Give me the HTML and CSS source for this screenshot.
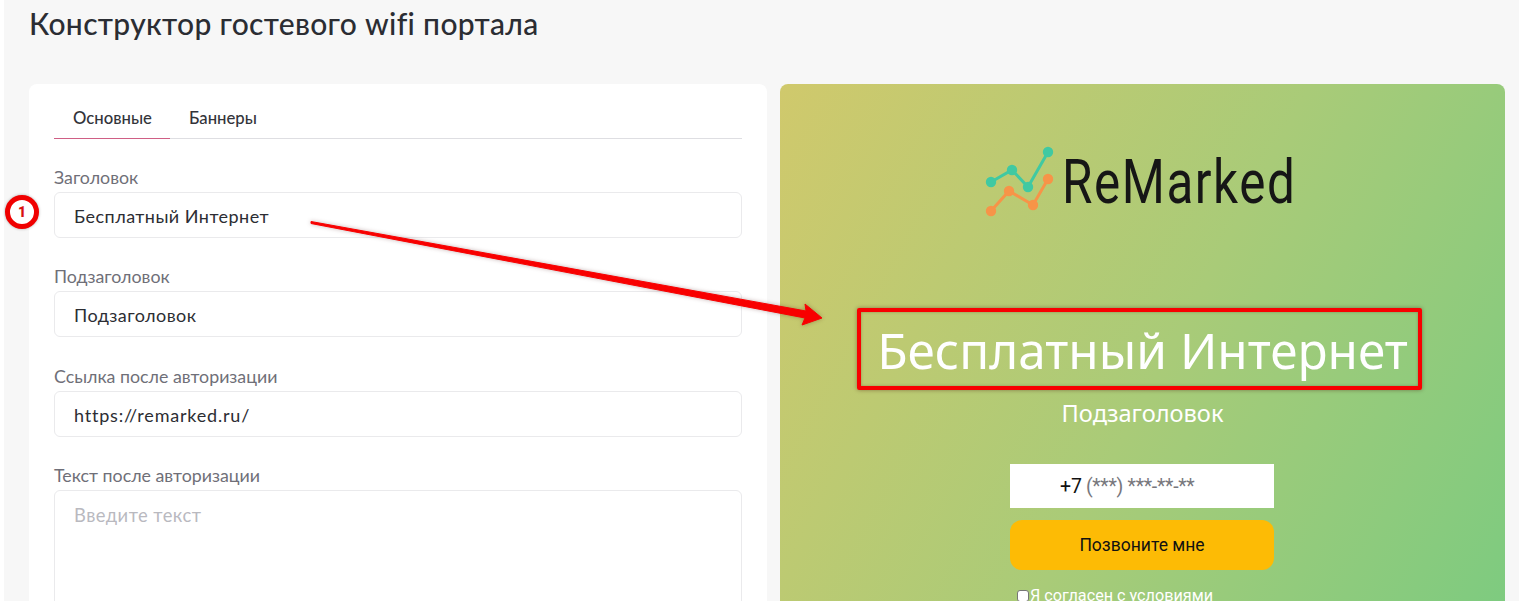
FILE: index.html
```html
<!DOCTYPE html>
<html lang="ru">
<head>
<meta charset="utf-8">
<title>Конструктор гостевого wifi портала</title>
<link rel="stylesheet" href="styles.css">
</head>
<body>
<main class="page">
  <h1 class="title">Конструктор гостевого wifi портала</h1>
  <div class="columns">
    <section class="card">
      <nav class="tabs">
        <a class="tab active">Основные</a>
        <a class="tab">Баннеры</a>
      </nav>
      <div class="field">
        <label class="label">Заголовок</label>
        <div class="input">Бесплатный Интернет</div>
      </div>
      <div class="field">
        <label class="label">Подзаголовок</label>
        <div class="input">Подзаголовок</div>
      </div>
      <div class="field">
        <label class="label">Ссылка после авторизации</label>
        <div class="input url">https://remarked.ru/</div>
      </div>
      <div class="field">
        <label class="label">Текст после авторизации</label>
        <div class="input area">Введите текст</div>
      </div>
    </section>
    <section class="preview">
      <div class="logo">
        <svg class="logo-mark" width="78" height="74" viewBox="0 0 78 74" aria-hidden="true">
          <polyline points="7,37 28,25 44,42 64,7" fill="none" stroke="#40c9a2" stroke-width="3"/>
          <circle cx="7" cy="37" r="5.2" fill="#40c9a2"/>
          <circle cx="28" cy="25" r="5.2" fill="#40c9a2"/>
          <circle cx="44" cy="42" r="5.2" fill="#40c9a2"/>
          <circle cx="64" cy="7" r="5.2" fill="#40c9a2"/>
          <polyline points="7,66 25,46 49,60 64,34" fill="none" stroke="#f79448" stroke-width="3"/>
          <circle cx="7" cy="66" r="5.2" fill="#f79448"/>
          <circle cx="25" cy="46" r="5.2" fill="#f79448"/>
          <circle cx="49" cy="60" r="5.2" fill="#f79448"/>
          <circle cx="64" cy="34" r="5.2" fill="#f79448"/>
        </svg>
        <span class="logo-text">ReMarked</span>
      </div>
      <h2 class="headline">Бесплатный Интернет</h2>
      <p class="subline">Подзаголовок</p>
      <div class="phone"><span class="phone-code">+7</span> <span class="phone-mask">(***) ***-**-**</span></div>
      <button class="call">Позвоните мне</button>
      <label class="consent"><span class="check"></span>Я согласен с условиями</label>
    </section>
  </div>
</main>
<div class="badge">1</div>
<div class="red-box"></div>
<svg class="arrow" width="530" height="120" viewBox="0 0 530 120" aria-hidden="true">
  <path d="M1,1.5 L496,91 L495,84 L512,98 L492,105 L495,98 L1,3.5 Z" fill="#f80000" stroke="#f80000" stroke-width="1" stroke-linejoin="round"/>
</svg>
</body>
</html>
```

FILE: styles.css
```css
* { box-sizing: border-box; }
html, body { margin: 0; height: 601px; overflow: hidden; background: #fff; }
body { font-family: "Inter", "Noto Sans", sans-serif; }

.page {
  margin-left: 4px;
  height: 601px;
  background: #f7f7f7;
  padding: 0 14px 0 25px;
  overflow: hidden;
}
.title {
  margin: 0;
  height: 84px;
  padding-top: 3px;
  font-family: "Lato", "Noto Sans", sans-serif;
  font-size: 30px;
  line-height: 40px;
  font-weight: 500;
  color: #2b2d33;
  letter-spacing: 0.33px;
}
.columns { display: flex; gap: 13px; align-items: flex-start; }

.card {
  width: 738px;
  height: 560px;
  flex: none;
  background: #fff;
  border-radius: 8px;
  padding: 16px 25px 0;
}
.tabs {
  display: flex;
  height: 39px;
  border-bottom: 1px solid #dedee2;
}
.tab {
  height: 39px;
  padding: 0 19px;
  font-family: "Lato", "Noto Sans", sans-serif;
  font-size: 16.7px;
  line-height: 37px;
  font-weight: 500;
  color: #33343a;
}
.tab.active { width: 116px; border-bottom: 1px solid #cf5f85; }

.field { margin-bottom: 29.4px; }
.tabs + .field { margin-top: 29px; }
.label {
  display: block;
  height: 27px;
  font-family: "Lato", "Noto Sans", sans-serif;
  font-size: 17.8px;
  line-height: 24px;
  color: #6f6f78;
  margin-top: -3px;
}
.input {
  height: 46px;
  border: 1px solid #eaeaec;
  border-radius: 6px;
  padding: 0 19px;
  font-family: "Lato", "Noto Sans", sans-serif;
  font-size: 18px;
  line-height: 47px;
  color: #2c2d33;
  letter-spacing: 0.45px;
  background: #fff;
}
.url { letter-spacing: 0.8px; }
.area { height: 240px; font-size: 18.4px; line-height: 48px; color: #b9b9bf; }

.preview {
  width: 725px;
  height: 560px;
  flex: none;
  border-radius: 8px;
  background: linear-gradient(118deg, #d0c96c 0%, #a9cb78 52%, #7ccb80 100%);
  display: flex;
  flex-direction: column;
  align-items: center;
  overflow: hidden;
  color: #fff;
}
.logo {
  display: flex;
  align-items: center;
  height: 74px;
  margin-top: 61px;
  margin-right: 8px;
}
.logo-mark { flex: none; }
.logo-text {
  display: block;
  width: 231px;
  margin-left: 0.5px;
  font-family: "Roboto", sans-serif;
  font-size: 61px;
  font-weight: 400;
  line-height: 74px;
  letter-spacing: 1.9px;
  color: #161616;
  white-space: nowrap;
  transform: scaleX(0.81);
  transform-origin: left center;
}
.headline {
  margin: 96px 0 0;
  height: 88px;
  font-family: "Noto Sans", "DejaVu Sans", sans-serif;
  font-size: 49.5px;
  line-height: 70px;
  font-weight: 400;
  color: #fff;
  white-space: nowrap;
}
.subline {
  margin: -6px 0 0;
  font-family: "Noto Sans", "DejaVu Sans", sans-serif;
  font-size: 23.6px;
  line-height: 32px;
  color: #fff;
}
.phone {
  margin: 35px 1px 0 0;
  width: 264px;
  height: 44px;
  background: #fff;
  font-family: "Roboto", sans-serif;
  font-size: 19.5px;
  line-height: 45px;
  padding-left: 50px;
  white-space: nowrap;
}
.phone-code { color: #111; }
.phone-mask { color: #77777d; letter-spacing: -0.3px; margin-left: -1px; }
.call {
  margin: 12px 1px 0 0;
  width: 264px;
  height: 50px;
  border: 0;
  border-radius: 12px;
  background: #fdbb05;
  font-family: "Roboto", sans-serif;
  font-size: 17.5px;
  color: #111;
}
.consent {
  align-self: flex-start;
  margin: 16px 0 0 237px;
  display: flex;
  align-items: center;
  font-family: "Roboto", sans-serif;
  font-size: 16.2px;
  line-height: 20px;
  color: #fff;
  white-space: nowrap;
}
.check {
  width: 12px;
  height: 12px;
  background: #fff;
  border: 1px solid #767676;
  border-radius: 3px;
  margin-right: 1px;
  flex: none;
}

.badge {
  position: absolute;
  left: 5px;
  top: 195px;
  width: 34px;
  height: 34px;
  border: 5px solid #f00000;
  border-radius: 50%;
  background: #fff;
  color: #d81010;
  font-family: "Roboto", sans-serif;
  font-size: 14px;
  font-weight: 900;
  line-height: 24px;
  text-align: center;
  box-shadow: 0 0 3px rgba(0,0,0,.3);
}
.red-box {
  position: absolute;
  left: 857px;
  top: 308px;
  width: 565px;
  height: 82px;
  border: 4px solid #f80000;
  border-radius: 2px;
  box-shadow: 0 0 4px rgba(60,0,0,.4), inset 0 0 3px rgba(60,0,0,.3);
}
.arrow {
  position: absolute;
  left: 310px;
  top: 220px;
  filter: drop-shadow(0 0 2px rgba(60,0,0,.3));
}
```
